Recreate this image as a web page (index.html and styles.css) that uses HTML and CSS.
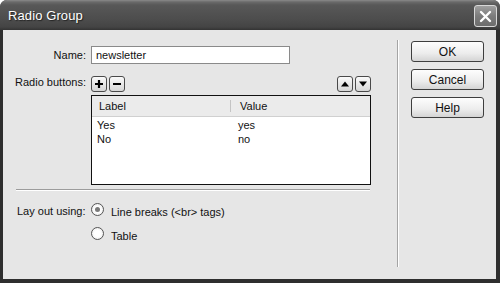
FILE: index.html
```html
<!DOCTYPE html>
<html lang="en">
<head>
  <meta charset="UTF-8">
  <title>Radio Group</title>
  <link rel="stylesheet" href="styles.css">
</head>
<body>
  <div class="window">
    <div class="titlebar">
      <span class="title">Radio Group</span>
      <button class="close-btn" aria-label="Close">
        <svg width="13" height="13" viewBox="0 0 13 13"><path d="M2 2 L11 11 M11 2 L2 11" stroke="#fff" stroke-width="2.4" stroke-linecap="round"/></svg>
      </button>
    </div>

    <div class="client">
      <div class="main">
        <div class="row name-row">
          <label class="field-label" for="name">Name:</label>
          <input id="name" class="text-input" type="text" value="newsletter">
        </div>

        <div class="row tools-row">
          <span class="field-label">Radio buttons:</span>
          <div class="tools">
            <div class="tool-group">
              <button class="tool-btn"><svg width="10" height="10" viewBox="0 0 10 10"><path d="M5 1 V9 M1 5 H9" stroke="#000" stroke-width="2.2"/></svg></button>
              <button class="tool-btn"><svg width="10" height="10" viewBox="0 0 10 10"><path d="M1 5 H9" stroke="#000" stroke-width="2.2"/></svg></button>
            </div>
            <div class="tool-group">
              <button class="tool-btn"><svg width="10" height="10" viewBox="0 0 10 10"><path d="M1 7.5 L5 2.5 L9 7.5 Z" fill="#000"/></svg></button>
              <button class="tool-btn"><svg width="10" height="10" viewBox="0 0 10 10"><path d="M1 2.5 L5 7.5 L9 2.5 Z" fill="#000"/></svg></button>
            </div>
          </div>
        </div>

        <div class="list">
          <div class="list-head">
            <span class="col col-label">Label</span>
            <span class="col col-value">Value</span>
          </div>
          <div class="list-row">
            <span class="col col-label">Yes</span>
            <span class="col col-value">yes</span>
          </div>
          <div class="list-row">
            <span class="col col-label">No</span>
            <span class="col col-value">no</span>
          </div>
        </div>

        <div class="hsep"></div>

        <div class="layout-opts">
          <span class="field-label">Lay out using:</span>
          <div class="radios">
            <label class="radio-item"><span class="radio checked"></span>Line breaks (&lt;br&gt; tags)</label>
            <label class="radio-item"><span class="radio"></span>Table</label>
          </div>
        </div>
      </div>

      <div class="vsep"></div>

      <div class="actions">
        <button class="btn">OK</button>
        <button class="btn">Cancel</button>
        <button class="btn">Help</button>
      </div>
    </div>
  </div>
</body>
</html>
```

FILE: styles.css
```css
body {
  margin: 0;
  background-color: #ffffff;
  font-family: "Liberation Sans", Arial, sans-serif;
  font-size: 11px;
  color: #111;
}
button {
  font-family: inherit;
  font-size: 11px;
  color: #111;
  padding: 0;
  cursor: default;
}
.window {
  width: 500px;
  height: 283px;
  background-color: #2e2e2e;
  border-radius: 7px 7px 0 0;
  display: flex;
  flex-direction: column;
  overflow: hidden;
}
.titlebar {
  height: 30px;
  box-sizing: border-box;
  padding: 0 3px 0 8px;
  display: flex;
  align-items: center;
  justify-content: space-between;
  background: linear-gradient(to bottom, #8a8a8a 0, #6a6a6a 2px, #585858 5px, #4c4c4c 20px, #444 27px, #333 30px);
}
.title {
  color: #fff;
  font-size: 13px;
  text-shadow: 1px 1px 1px #222;
  letter-spacing: 0.1px;
  margin-top: 1px;
}
.close-btn {
  width: 23px;
  height: 22px;
  margin-top: 2px;
  border: 1px solid #d8d8d8;
  border-radius: 3px;
  background: linear-gradient(to bottom, #a0a0a0, #7c7c7c 50%, #6c6c6c);
  display: flex;
  align-items: center;
  justify-content: center;
}
.client {
  flex: 1;
  margin: 0 4px 4px 3px;
  background-color: #e6e6e6;
  display: flex;
}
.main {
  width: 394px;
  box-sizing: border-box;
  padding: 16px 0 0 12px;
}
.row {
  display: flex;
  align-items: center;
}
.field-label {
  width: 76px;
  box-sizing: border-box;
  padding-right: 5px;
  text-align: right;
  flex-shrink: 0;
}
.text-input {
  width: 199px;
  height: 18px;
  box-sizing: border-box;
  border: 1px solid #8a8a8a;
  background: #fff;
  padding: 0 4px;
  font-family: inherit;
  font-size: 11px;
  color: #111;
  outline: none;
}
.tools-row {
  margin-top: 11px;
  align-items: flex-start;
}
.tools-row .field-label {
  padding-top: 1px;
}
.tools {
  width: 280px;
  display: flex;
  justify-content: space-between;
  padding-top: 1px;
}
.tool-group {
  display: flex;
  gap: 2px;
}
.tool-btn {
  width: 16px;
  height: 16px;
  border: 1px solid #4a4a4a;
  border-radius: 3px;
  background: linear-gradient(to bottom, #fafafa, #d6d6d6);
  display: flex;
  align-items: center;
  justify-content: center;
}
.list {
  margin: 3px 0 0 76px;
  width: 280px;
  height: 90px;
  box-sizing: border-box;
  border: 1px solid #111;
  background: #fff;
}
.list-head {
  display: flex;
  height: 20px;
  align-items: center;
  background: #ebebeb;
  border-bottom: 1px solid #d0d0d0;
}
.list-head .col-label {
  padding-left: 7px;
  border-right: 1px solid #c4c4c4;
  width: 131px;
}
.list-head .col-value {
  padding-left: 9px;
}
.list-row {
  display: flex;
  height: 14px;
  align-items: center;
}
.list-row:nth-child(2) {
  margin-top: 1px;
}
.list-row .col-label {
  padding-left: 5px;
  width: 141px;
}
.hsep {
  margin: 4px 0 0 1px;
  width: 354px;
  height: 1px;
  border-top: 1px solid #9c9c9c;
  background: #fff;
}
.layout-opts {
  display: flex;
  margin-top: 11px;
}
.layout-opts .field-label {
  padding-top: 3px;
  text-align: left;
  padding-left: 2px;
}
.radios {
  display: flex;
  flex-direction: column;
  gap: 10px;
}
.radio-item {
  display: flex;
  align-items: center;
  gap: 7px;
  height: 14px;
}
.radio-item:first-child {
  padding-top: 3px;
}
.radio {
  width: 13px;
  height: 13px;
  box-sizing: border-box;
  border: 1px solid #555;
  border-radius: 50%;
  background: radial-gradient(circle, #fff 40%, #e4e4e4 100%);
  position: relative;
  margin-top: -5px;
}
.radio.checked::after {
  content: "";
  position: absolute;
  left: 3px;
  top: 3px;
  width: 5px;
  height: 5px;
  border-radius: 50%;
  background: #7a7a7a;
}
.vsep {
  margin: 10px 0 12px 0;
  width: 1px;
  border-left: 1px solid #a4a4a4;
  background: #fff;
}
.actions {
  padding: 11px 0 0 12px;
  display: flex;
  flex-direction: column;
  gap: 7px;
}
.btn {
  width: 73px;
  height: 21px;
  border: 1px solid #3e3e3e;
  border-radius: 3px;
  background: linear-gradient(to bottom, #fdfdfd, #ececec 60%, #d4d4d4);
  font-size: 12px;
}
```
